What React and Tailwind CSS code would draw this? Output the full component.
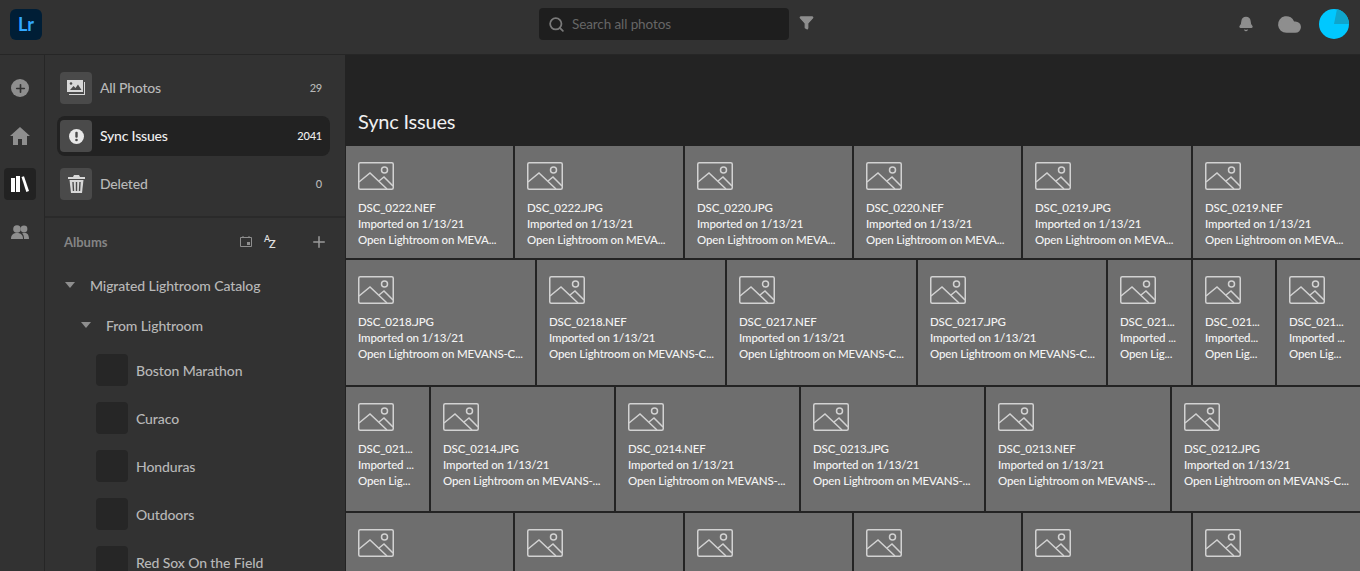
import React from 'react'
import { Bell, Cloud, Funnel, Plus, Search } from 'lucide-react'

const font = { fontFamily: 'Lato, sans-serif' }

const rows = [
  {
    height: 'h-[112px]',
    tiles: [
      [167, 'DSC_0222.NEF', 'Imported on 1/13/21', 'Open Lightroom on MEVA...'],
      [168, 'DSC_0222.JPG', 'Imported on 1/13/21', 'Open Lightroom on MEVA...'],
      [167, 'DSC_0220.JPG', 'Imported on 1/13/21', 'Open Lightroom on MEVA...'],
      [167, 'DSC_0220.NEF', 'Imported on 1/13/21', 'Open Lightroom on MEVA...'],
      [168, 'DSC_0219.JPG', 'Imported on 1/13/21', 'Open Lightroom on MEVA...'],
      [167, 'DSC_0219.NEF', 'Imported on 1/13/21', 'Open Lightroom on MEVA...'],
    ],
  },
  {
    height: 'h-[125px]',
    tiles: [
      [189, 'DSC_0218.JPG', 'Imported on 1/13/21', 'Open Lightroom on MEVANS-C...'],
      [188, 'DSC_0218.NEF', 'Imported on 1/13/21', 'Open Lightroom on MEVANS-C...'],
      [189, 'DSC_0217.NEF', 'Imported on 1/13/21', 'Open Lightroom on MEVANS-C...'],
      [188, 'DSC_0217.JPG', 'Imported on 1/13/21', 'Open Lightroom on MEVANS-C...'],
      [83, 'DSC_021...', 'Imported ...', 'Open Lig...'],
      [82, 'DSC_021...', 'Imported...', 'Open Lig...'],
      [83, 'DSC_021...', 'Imported ...', 'Open Lig...'],
    ],
  },
  {
    height: 'h-[124px]',
    tiles: [
      [83, 'DSC_021...', 'Imported ...', 'Open Lig...'],
      [183, 'DSC_0214.JPG', 'Imported on 1/13/21', 'Open Lightroom on MEVANS-...'],
      [183, 'DSC_0214.NEF', 'Imported on 1/13/21', 'Open Lightroom on MEVANS-...'],
      [183, 'DSC_0213.JPG', 'Imported on 1/13/21', 'Open Lightroom on MEVANS-...'],
      [184, 'DSC_0213.NEF', 'Imported on 1/13/21', 'Open Lightroom on MEVANS-...'],
      [188, 'DSC_0212.JPG', 'Imported on 1/13/21', 'Open Lightroom on MEVANS-C...'],
    ],
  },
  {
    height: 'h-[112px]',
    tiles: [[167], [168], [167], [167], [168], [167]],
  },
]

const albums = ['Boston Marathon', 'Curaco', 'Honduras', 'Outdoors', 'Red Sox On the Field']

const PlaceholderIcon = () => (
  <svg width="36" height="28" viewBox="0 0 36 28" fill="none" stroke="#d2d2d2" strokeWidth="1.5">
    <rect x="0.75" y="0.75" width="34.5" height="26.5" rx="1.5" />
    <path d="M1 20 L12 11 L29 27" />
    <path d="M21 19 L26 15 L35 24" />
    <circle cx="26.5" cy="8" r="3" />
  </svg>
)

const Tile = ({ tile }) => {
  const [width, name, date, note] = tile
  return (
    <div className="bg-[#6e6e6e] pl-3 pt-4 shrink-0 overflow-hidden" style={{ width }}>
      <PlaceholderIcon />
      <div className="mt-[10px] text-[11.5px] leading-4 tracking-[-0.15px] font-medium text-[#f4f4f4] whitespace-nowrap">
        <p>{name}</p>
        <p>{date}</p>
        <p>{note}</p>
      </div>
    </div>
  )
}

const PhotosIcon = () => (
  <svg width="18" height="16" viewBox="0 0 18 16" fill="#d8d8d8">
    <path d="M0 0 H16 V12 H0 Z M3 10 L6.5 6 L8.5 8 L11 4.5 L14.5 10 Z" fillRule="evenodd" />
    <circle cx="4" cy="3.5" r="1.3" fill="#4a4a4a" />
    <path d="M17 2 H18 V15 H2 V14 H17 Z" />
  </svg>
)

const AlertIcon = () => (
  <svg width="15" height="15" viewBox="0 0 15 15">
    <circle cx="7.5" cy="7.5" r="7.5" fill="#e8e8e8" />
    <rect x="6.3" y="2.8" width="2.4" height="6" rx="1" fill="#4a4a4a" />
    <circle cx="7.5" cy="11" r="1.3" fill="#4a4a4a" />
  </svg>
)

const TrashIcon = () => (
  <svg width="17" height="18" viewBox="0 0 17 18" fill="#d8d8d8">
    <path d="M6 0 H11 L12 2 H17 V4 H0 V2 H5 Z" />
    <path d="M1.5 5 H15.5 L14 18 H3 Z" />
    <path d="M5 7 L5.5 16 M8.5 7 V16 M12 7 L11.5 16" stroke="#4a4a4a" strokeWidth="1.4" />
  </svg>
)

const HomeIcon = () => (
  <svg width="20" height="18" viewBox="0 0 20 18" fill="#8e8e8e">
    <path d="M10 0 L20 9 H17 V18 H12 V12 H8 V18 H3 V9 H0 Z" />
  </svg>
)

const PeopleIcon = () => (
  <svg width="18" height="14" viewBox="0 0 18 14" fill="#8e8e8e">
    <circle cx="6" cy="4" r="3.8" />
    <path d="M0 14 C0 9 3 8 6 8 C9 8 12 9 12 14 Z" />
    <circle cx="13" cy="4" r="3.4" />
    <path d="M13 14 C13 11 12.5 9.5 11 8.5 C12 8 13 8 14 8 C16 8 18 9.5 18 14 Z" />
  </svg>
)

const LibraryIcon = () => (
  <svg width="18" height="16" viewBox="0 0 18 16" fill="#fff">
    <rect x="0" y="2" width="4" height="14" />
    <rect x="5" y="0" width="4" height="16" />
    <path d="M10.5 1 L13 0.2 L18 15 L15.3 16 Z" />
  </svg>
)

const CalendarIcon = () => (
  <svg width="12" height="11" viewBox="0 0 12 11" fill="none" stroke="#8e8e8e">
    <path d="M0.5 1.5 H11.5 V10.5 H0.5 Z" />
    <path d="M3 0 V2 M9 0 V2" />
    <rect x="7" y="6" width="3" height="3" fill="#8e8e8e" stroke="none" />
  </svg>
)

const NavRow = ({ icon, label, count, active }) => (
  <div className={`h-10 ml-3 mr-[15px] flex items-center rounded-lg ${active ? 'bg-[#222222]' : ''}`}>
    <div className="w-8 h-8 ml-[3px] rounded bg-[#4a4a4a] flex items-center justify-center shrink-0">{icon}</div>
    <span
      className={`ml-2 pb-[2px] text-[14px] tracking-[-0.2px] font-medium ${
        active ? 'text-[#eeeeee]' : 'text-[#b8b8b8]'
      }`}
    >
      {label}
    </span>
    <span
      className={`ml-auto mr-2 text-[11px] tracking-[-0.2px] font-medium ${
        active ? 'text-[#eeeeee]' : 'text-[#b8b8b8]'
      }`}
    >
      {count}
    </span>
  </div>
)

const App = () => {
  return (
    <div className="w-[1360px] h-[571px] overflow-hidden bg-[#232323] flex flex-col" style={font}>
      <header className="h-[55px] shrink-0 bg-[#323232] border-b border-[#262626] flex items-center">
        <div className="ml-[10px] w-8 h-[31px] rounded-md bg-[#001e36] flex items-center justify-center text-[#31a8ff] text-[18px] font-bold leading-none mb-[6px]">
          Lr
        </div>
        <div className="flex items-center ml-[497px] mb-[6px]">
          <div className="w-[250px] h-8 rounded bg-[#1e1e1e] flex items-center pl-[9px]">
            <Search size={17} strokeWidth={2.5} className="text-[#7a7a7a]" />
            <span className="ml-[7px] mt-[1px] text-[13.5px] tracking-[-0.1px] text-[#666666]">Search all photos</span>
          </div>
          <Funnel size={15} fill="#8e8e8e" className="ml-[10px] text-[#8e8e8e] mb-[4px]" />
        </div>
        <div className="ml-auto flex items-center mr-[11px] mb-[6px]">
          <Bell size={16} fill="#8e8e8e" className="text-[#8e8e8e]" />
          <Cloud size={25} fill="#8e8e8e" className="ml-[23px] text-[#8e8e8e]" />
          <div className="ml-[17px] w-[30px] h-[30px] rounded-full bg-[#00c8ff] overflow-hidden">
            <svg width="30" height="30" viewBox="0 0 30 30">
              <path d="M15 15 L18 0 L30 0 L30 15 Z" fill="#0fa5cc" />
            </svg>
          </div>
        </div>
      </header>
      <div className="flex flex-1 min-h-0">
        <nav className="w-[45px] shrink-0 bg-[#323232] border-r border-[#262626] flex flex-col pl-1 pt-[17px] gap-4">
          <div className="w-8 h-8 flex items-center justify-center">
            <div className="w-[18px] h-[18px] rounded-full bg-[#8e8e8e] flex items-center justify-center">
              <Plus size={13} strokeWidth={3} className="text-[#323232]" />
            </div>
          </div>
          <div className="w-8 h-8 flex items-center justify-center">
            <HomeIcon />
          </div>
          <div className="w-8 h-8 rounded bg-[#222222] flex items-center justify-center">
            <LibraryIcon />
          </div>
          <div className="w-8 h-8 flex items-center justify-center">
            <PeopleIcon />
          </div>
        </nav>
        <aside className="w-[300px] shrink-0 bg-[#323232] overflow-hidden">
          <div className="h-[163px] border-b-2 border-[#2a2a2a] pt-[13px] flex flex-col gap-2">
            <NavRow icon={<PhotosIcon />} label="All Photos" count="29" />
            <NavRow active icon={<AlertIcon />} label="Sync Issues" count="2041" />
            <NavRow icon={<TrashIcon />} label="Deleted" count="0" />
          </div>
          <div className="h-[47px] pl-[19px] pr-[18px] flex items-center">
            <span className="mt-[2px] text-[13px] font-bold text-[#858585]">Albums</span>
            <div className="ml-auto mr-[-1px]">
              <CalendarIcon />
            </div>
            <div className="ml-3 w-3 h-3 relative font-semibold text-[#e0e0e0] leading-none">
              <span className="absolute left-[1px] top-[-2px] text-[9px]">A</span>
              <span className="absolute left-[6px] top-[2px] text-[11px]">Z</span>
            </div>
            <Plus size={18} className="ml-[35px] mr-[-1px] text-[#9a9a9a]" />
          </div>
          <div className="h-10 flex items-center pl-[20px] text-[14px] tracking-[-0.1px] font-medium text-[#b8b8b8]">
            <span className="w-0 h-0 border-x-[5px] border-x-transparent border-t-[6px] border-t-[#8e8e8e]" />
            <span className="ml-[15px]">Migrated Lightroom Catalog</span>
          </div>
          <div className="h-10 flex items-center pl-[36px] text-[14px] tracking-[-0.1px] font-medium text-[#b8b8b8]">
            <span className="w-0 h-0 border-x-[5px] border-x-transparent border-t-[6px] border-t-[#8e8e8e]" />
            <span className="ml-[15px]">From Lightroom</span>
          </div>
          <div className="flex flex-col gap-4 pl-[51px] pt-[9px]">
            {albums.map((album) => (
              <div key={album} className="flex items-center h-8 shrink-0">
                <div className="w-8 h-8 rounded bg-[#262626]" />
                <span className="ml-2 text-[14px] tracking-[-0.1px] font-medium text-[#b8b8b8]">{album}</span>
              </div>
            ))}
          </div>
        </aside>
        <main className="flex-1 min-w-0 pl-px">
          <h1 className="h-[91px] pt-[52px] pl-3 text-[20px] leading-7 tracking-[-0.2px] text-[#f0f0f0]">Sync Issues</h1>
          <div className="flex flex-col gap-[2px]">
            {rows.map((row, i) => (
              <div key={i} className={`flex gap-[2px] shrink-0 ${row.height}`}>
                {row.tiles.map((tile, j) => (
                  <Tile key={j} tile={tile} />
                ))}
              </div>
            ))}
          </div>
        </main>
      </div>
    </div>
  )
}

export default App
